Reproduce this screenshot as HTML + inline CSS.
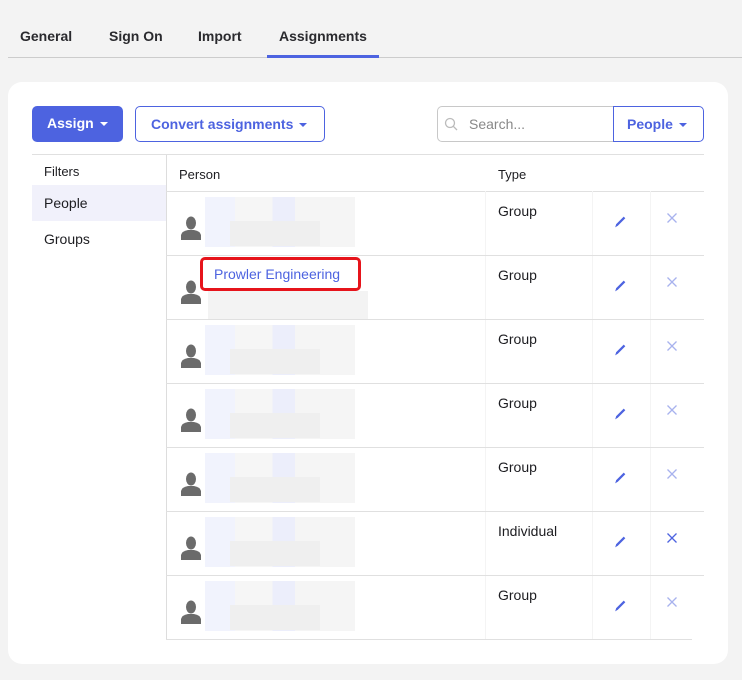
<!DOCTYPE html>
<html><head><style>
*{box-sizing:border-box;margin:0;padding:0}
body{width:742px;height:680px;background:#f3f3f3;font-family:"Liberation Sans",sans-serif;position:relative;overflow:hidden;color:#1d1d21}
.a{position:absolute}
.tab{position:absolute;top:28px;font-size:14px;font-weight:bold;color:#2a2a2e}
.card{position:absolute;left:8px;top:82px;width:720px;height:582px;background:#fff;border-radius:14px}
.btn{position:absolute;top:106px;height:36px;border-radius:5px;font-size:14px;font-weight:bold;line-height:34px}
.car{display:inline-block;width:0;height:0;border-left:4px solid transparent;border-right:4px solid transparent;border-top:4px solid currentColor;vertical-align:middle;margin-left:6px}
.hl{position:absolute;height:1px;background:#e0e0e0}
.vl{position:absolute;width:1px;background:#f4f4f4}
.t{position:absolute;font-size:14px;color:#1d1d21}
.px{position:absolute}
</style></head><body>
<div class="tab" style="left:20px">General</div>
<div class="tab" style="left:109px">Sign On</div>
<div class="tab" style="left:198px">Import</div>
<div class="tab" style="left:279px">Assignments</div>
<div class="a" style="left:8px;top:57px;width:734px;height:1px;background:#ccc"></div>
<div class="a" style="left:267px;top:55px;width:112px;height:3px;background:#4d63e0"></div>
<div class="card"></div>
<div class="btn" style="left:32px;width:91px;background:#4d63e0;color:#fff;padding-left:15px">Assign<span class="car"></span></div>
<div class="btn" style="left:135px;width:190px;border:1px solid #4d63e0;color:#4d63e0;padding-left:15px;background:#fff">Convert assignments<span class="car"></span></div>
<div class="a" style="left:437px;top:106px;width:177px;height:36px;border:1px solid #c8c8c8;border-right:none;border-radius:5px 0 0 5px"></div>
<svg class="a" style="left:444px;top:117px" width="14" height="14" viewBox="0 0 14 14"><circle cx="6" cy="6" r="4.5" fill="none" stroke="#bbb" stroke-width="1.3"/><line x1="9.3" y1="9.3" x2="13" y2="13" stroke="#bbb" stroke-width="1.3"/></svg>
<div class="t" style="left:469px;top:116px;color:#888">Search...</div>
<div class="btn" style="left:613px;width:91px;border:1px solid #4d63e0;color:#4d63e0;padding-left:13px;border-radius:0 5px 5px 0">People<span class="car"></span></div>
<div class="hl" style="left:32px;top:154px;width:672px"></div>
<div class="a" style="left:32px;top:185px;width:134px;height:36px;background:#f1f1fb"></div>
<div class="t" style="left:44px;top:164px;font-size:13px">Filters</div>
<div class="t" style="left:44px;top:195px">People</div>
<div class="t" style="left:44px;top:231px">Groups</div>
<div class="a" style="left:166px;top:155px;width:1px;height:485px;background:#ddd"></div>
<div class="t" style="left:179px;top:167px;font-size:13px">Person</div>
<div class="t" style="left:498px;top:167px;font-size:13px">Type</div>
<div class="hl" style="left:166px;top:191px;width:538px"></div>
<div class="vl" style="left:485px;top:191px;height:448px"></div>
<div class="vl" style="left:592px;top:191px;height:448px"></div>
<div class="vl" style="left:650px;top:191px;height:448px"></div>
<div id="rows"></div>
<script>
var types=["Group","Group","Group","Group","Group","Individual","Group"];
var h="";
for(var i=0;i<7;i++){var y=191+i*64;
h+='<div class="hl" style="left:166px;top:'+(y+64)+'px;width:'+(i==6?526:538)+'px"></div>';
h+='<svg class="px" style="left:180px;top:'+(y+25)+'px" width="22" height="24" viewBox="0 0 22 24"><ellipse cx="11" cy="7" rx="5" ry="6.5" fill="#6b6b6b"/><path d="M1 24 L1 19 Q2 15 8 14 L14 14 Q20 15 21 19 L21 24Z" fill="#6b6b6b"/></svg>';
if(i!=1){h+='<div class="px" style="left:205px;top:'+(y+6)+'px;width:150px;height:50px;background:linear-gradient(90deg,#f1f3fd 0 20%,#f6f6f6 20% 45%,#eceefb 45% 60%,#f5f5f5 60% 100%)"></div>';
h+='<div class="px" style="left:230px;top:'+(y+30)+'px;width:90px;height:25px;background:#efefef"></div>';}
else{h+='<div class="px" style="left:208px;top:'+(y+36)+'px;width:160px;height:28px;background:#f3f3f3"></div>';}
h+='<div class="t" style="left:498px;top:'+(y+12)+'px">'+types[i]+'</div>';
h+='<svg class="px" style="left:613px;top:'+(y+23)+'px" width="15" height="15" viewBox="0 0 14 14"><path d="M2 12.5 L3 9.5 L10 2.5 L11.5 4 L4.5 11Z" fill="#4d63e0"/></svg>';
h+='<svg class="px" style="left:666px;top:'+(y+21)+'px" width="12" height="12" viewBox="0 0 12 12"><path d="M1.5 1.5 L10.5 10.5 M10.5 1.5 L1.5 10.5" stroke="'+(i==5?'#4d63e0':'#a8b2ee')+'" stroke-width="1.3"/></svg>';}
document.getElementById("rows").innerHTML=h;
</script>
<div class="a" style="left:200px;top:257px;width:161px;height:34px;border:3px solid #e6141b;border-radius:5px;background:#fff"></div>
<div class="t" style="left:214px;top:266px;color:#4d63e0">Prowler Engineering</div>
</body></html>
